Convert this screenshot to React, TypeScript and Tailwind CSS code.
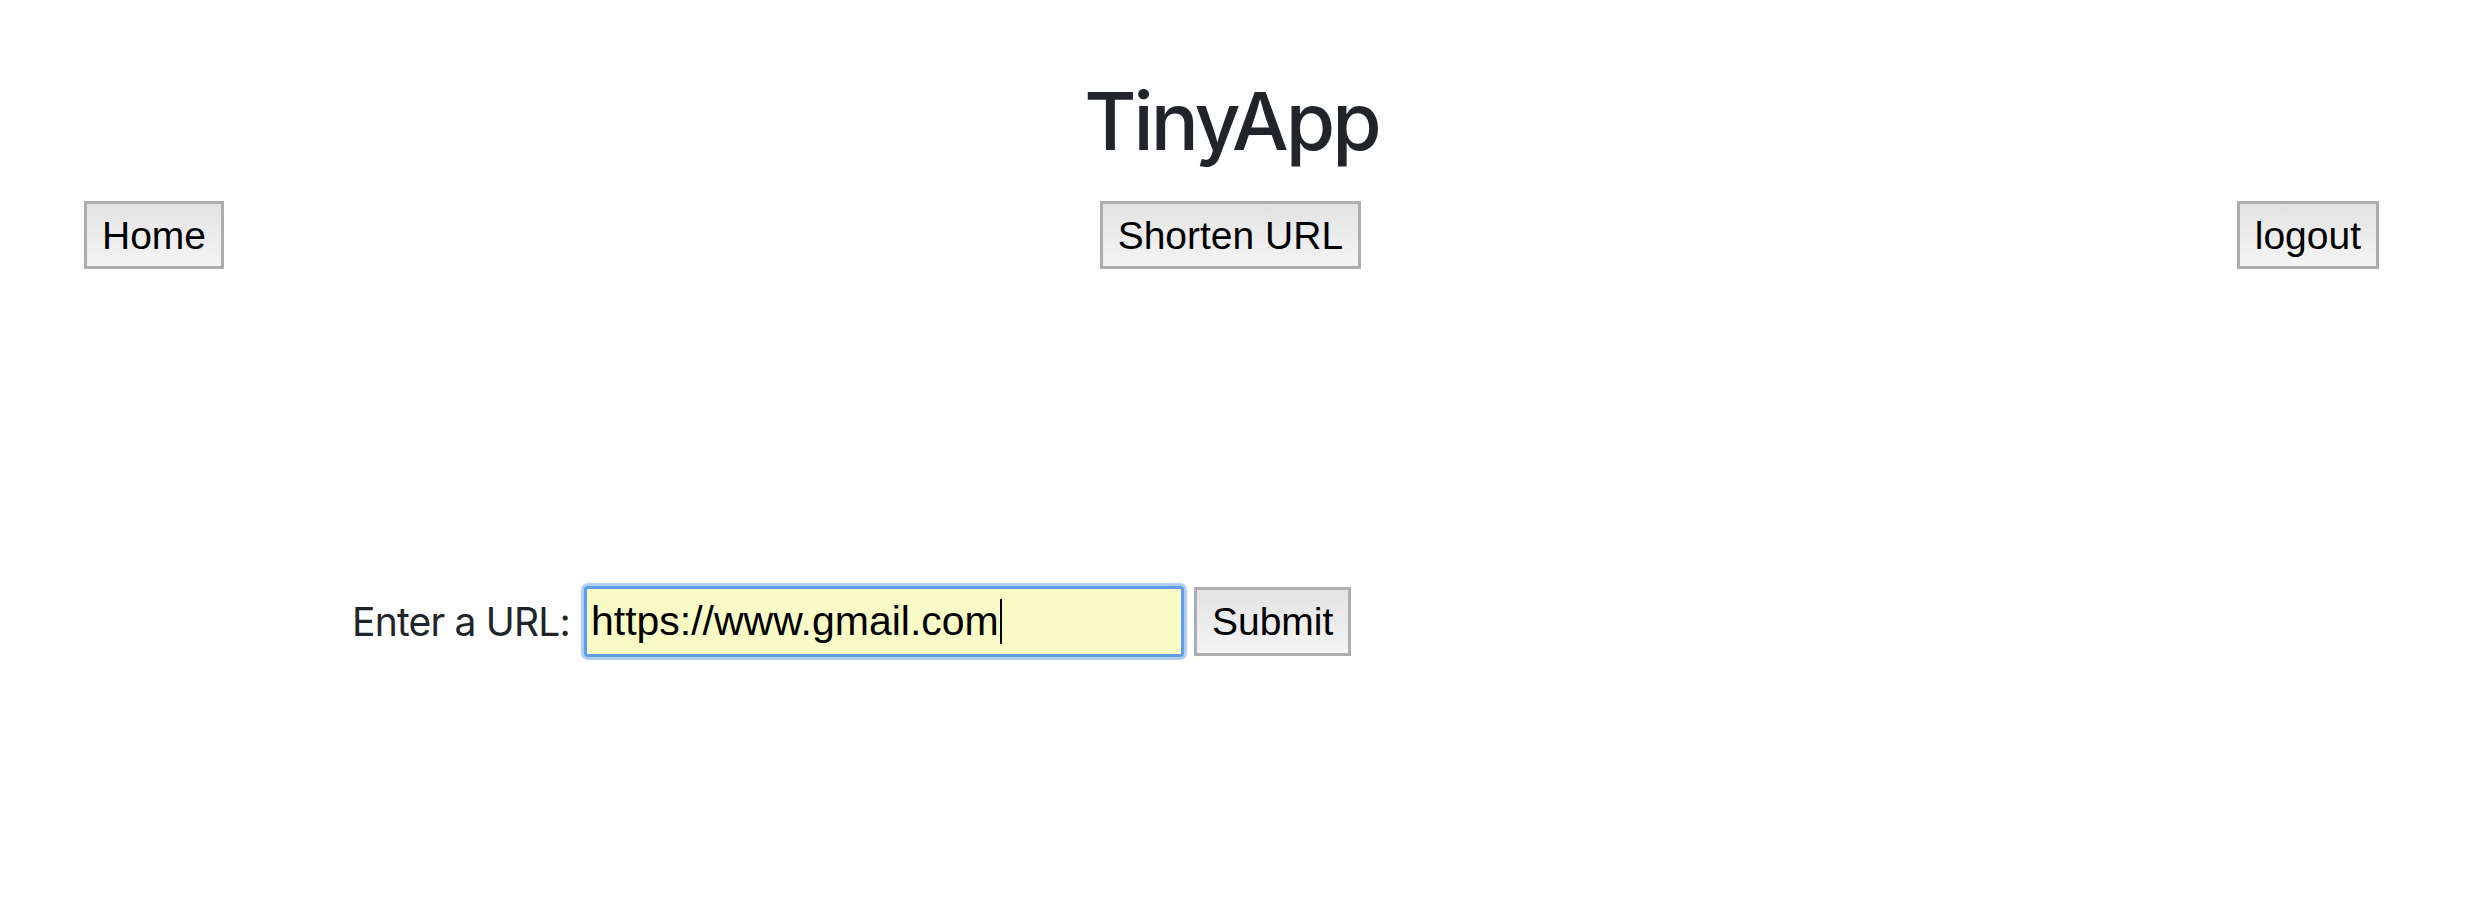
export default function App() {
  const buttonClass =
    'h-[68px] px-[15px] border-[3px] border-[#adadad] bg-gradient-to-b from-[#e3e3e3] to-[#f4f4f4] text-black text-[39px] leading-none flex items-center font-["Liberation_Sans",Arial,sans-serif]'

  return (
    <div className="min-h-screen w-full bg-white text-[#212529] font-['Inter',sans-serif]">
      <header className="pt-[73px] pr-[9px]">
        <h1 className="text-center text-[80px] leading-[96px] font-medium tracking-[-3px]">TinyApp</h1>
      </header>

      <nav className="mt-[32px] flex justify-between pl-[84px] pr-[93px]">
        <button className={buttonClass}>Home</button>
        <button className={buttonClass}>Shorten URL</button>
        <button className={buttonClass}>logout</button>
      </nav>

      <form className="mt-[317px] flex items-center pl-[352px]" onSubmit={(e) => e.preventDefault()}>
        <label className="text-[39px] leading-none tracking-[-0.8px] mr-[14px]">Enter a URL:</label>
        <div className="w-[600px] h-[71px] rounded-[4px] border-[3px] border-[#5f9ce5] bg-[#f9fbc6] shadow-[0_0_1px_3px_#acccf3] flex items-center pl-[4px] text-black text-[41px] font-['Liberation_Sans',Arial,sans-serif]">
          <span>https://www.gmail.com</span>
          <span className="inline-block w-[2px] h-[45px] bg-black ml-[1px]" />
        </div>
        <button type="submit" className={buttonClass + ' ml-[10px] h-[69px]'}>
          Submit
        </button>
      </form>
    </div>
  )
}
